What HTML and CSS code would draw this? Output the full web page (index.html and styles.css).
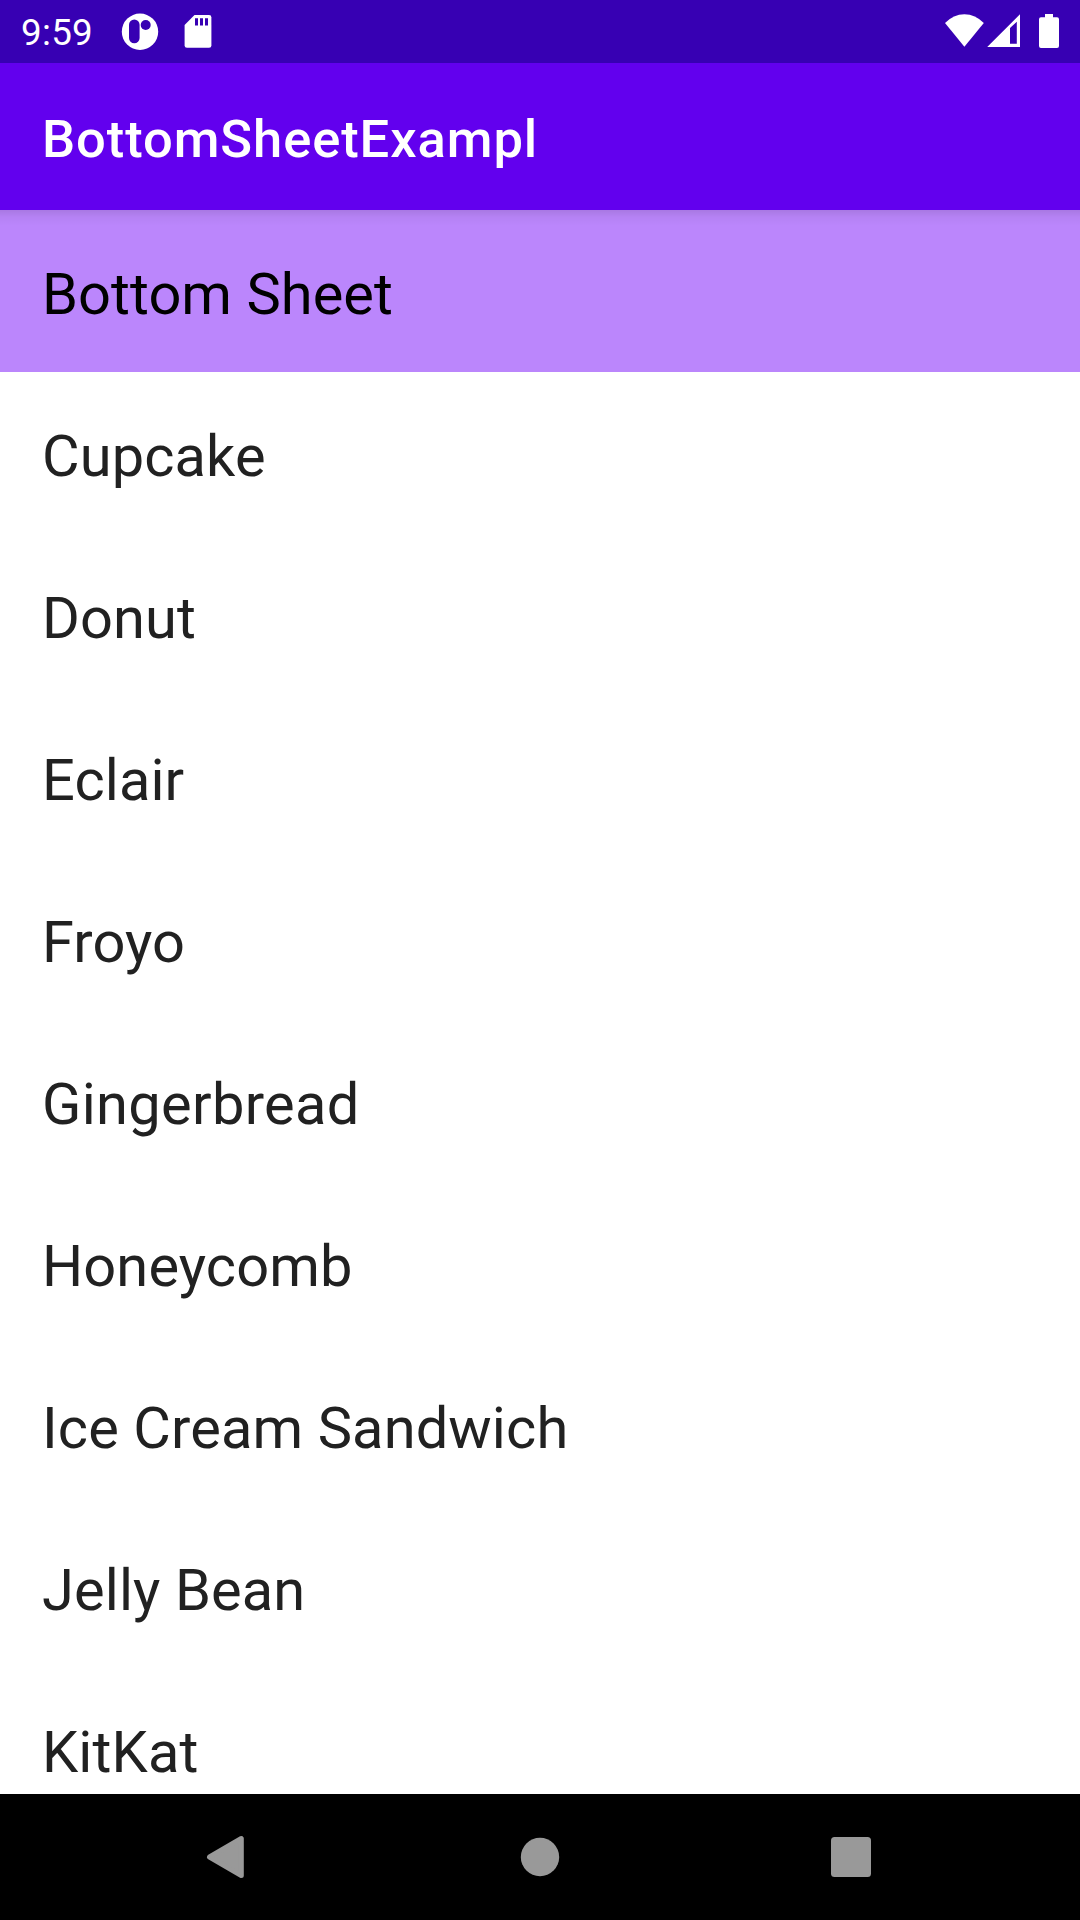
FILE: index.html
```html
<!DOCTYPE html>
<html lang="en">
<head>
<meta charset="utf-8">
<title>BottomSheetExampl</title>
<link rel="stylesheet" href="styles.css">
</head>
<body>
<div class="screen">
  <header class="status">
    <span class="clock">9:59</span>
    <svg class="icon-app" width="38" height="38" viewBox="121 13 38 38"><circle cx="140" cy="31.7" r="18.2" fill="#fff"/><rect x="129" y="19.5" width="10.6" height="23.8" rx="5.3" fill="#3700b3"/><circle cx="145.7" cy="25" r="5" fill="#3700b3"/></svg>
    <svg class="icon-sd" width="28" height="34" viewBox="184 15 28 34"><path fill="#fff" d="M194.5 15H209q2.4 0 2.4 2.4v28q0 2.4-2.4 2.4h-22q-2.4 0-2.4-2.4V25z"/><path stroke="#3700b3" stroke-width="3" d="M196.5 18.2v7.4M201.5 18.2v7.4M206.5 18.2v7.4"/></svg>
    <span class="spacer"></span>
    <svg class="icon-wifi" width="40" height="34" viewBox="945 14 40 34"><path fill="#fff" d="M945 23Q953.500 14.200 964.400 14.200T983.800 23L964.400 46.800z"/></svg>
    <svg class="icon-cell" width="33" height="33" viewBox="987 14 33 33"><path fill="#fff" fill-rule="evenodd" d="M1020 14.200V47H987.200zM1010 28v15.700h6.800V21.800z"/></svg>
    <svg class="icon-battery" width="20" height="34" viewBox="0 0 20 34"><path fill="#fff" d="M6 0h8v3.200h4q2 0 2 2v26.800q0 2-2 2H2q-2 0-2-2V5.200q0-2 2-2h4z"/></svg>
  </header>
  <div class="appbar"><h1 class="title">BottomSheetExampl</h1></div>
  <main class="sheet">
    <div class="row heading">Bottom Sheet</div>
    <div class="row">Cupcake</div>
    <div class="row">Donut</div>
    <div class="row">Eclair</div>
    <div class="row">Froyo</div>
    <div class="row loose">Gingerbread</div>
    <div class="row">Honeycomb</div>
    <div class="row">Ice Cream Sandwich</div>
    <div class="row">Jelly Bean</div>
    <div class="row">KitKat</div>
  </main>
  <nav class="nav">
    <svg width="40" height="46" viewBox="0 0 40 46"><path fill="#999" stroke="#999" stroke-width="5" stroke-linejoin="round" d="M36.300 4.500v37L4.500 23z"/></svg>
    <svg class="home" width="40" height="40" viewBox="0 0 40 40"><circle cx="20" cy="20" r="19.200" fill="#999"/></svg>
    <svg class="recents" width="40" height="40" viewBox="0 0 40 40"><rect width="40" height="40" rx="3.500" fill="#999"/></svg>
  </nav>
</div>
</body>
</html>
```
FILE: styles.css
```css
body { margin: 0; font-family: Roboto, sans-serif; background: #fff; }
.screen { display: flex; flex-direction: column; height: 1920px; overflow: hidden; }
.status { display: flex; height: 63px; flex: none; background: #3700b3; color: #fff; padding-left: 21px; padding-right: 21px; }
.clock { font-size: 36.75px; line-height: 66px; width: 100px; letter-spacing: 0.3px; }
.icon-app { margin-top: 13px; }
.icon-sd { margin: 15px 0 0 25px; }
.spacer { flex: 1; }
.icon-wifi, .icon-cell, .icon-battery { margin-top: 14px; }
.icon-cell { margin-left: 2px; }
.icon-battery { margin-left: 19px; }
.appbar { flex: none; height: 147px; background: #6200ee; color: #fff; padding-left: 42px; }
.title { margin: 0; font-size: 52.5px; font-weight: 500; line-height: 152px; letter-spacing: 0.92px; }
.sheet { flex: 1; min-height: 0; overflow: hidden; }
.row { height: 162px; line-height: 168px; padding-left: 42px; font-size: 57.75px; color: #212121; letter-spacing: 0.12px; }
.heading { color: #000; letter-spacing: 0.06px; background: linear-gradient(rgba(0, 0, 0, 0.1), rgba(0, 0, 0, 0.035) 7px, transparent 16px) #bb86fc; }
.loose { letter-spacing: 0.34px; }
.nav { flex: none; height: 126px; background: #000; display: flex; align-items: center; padding-left: 205px; }
.home { margin-left: 275px; }
.recents { margin-left: 271px; }
```
